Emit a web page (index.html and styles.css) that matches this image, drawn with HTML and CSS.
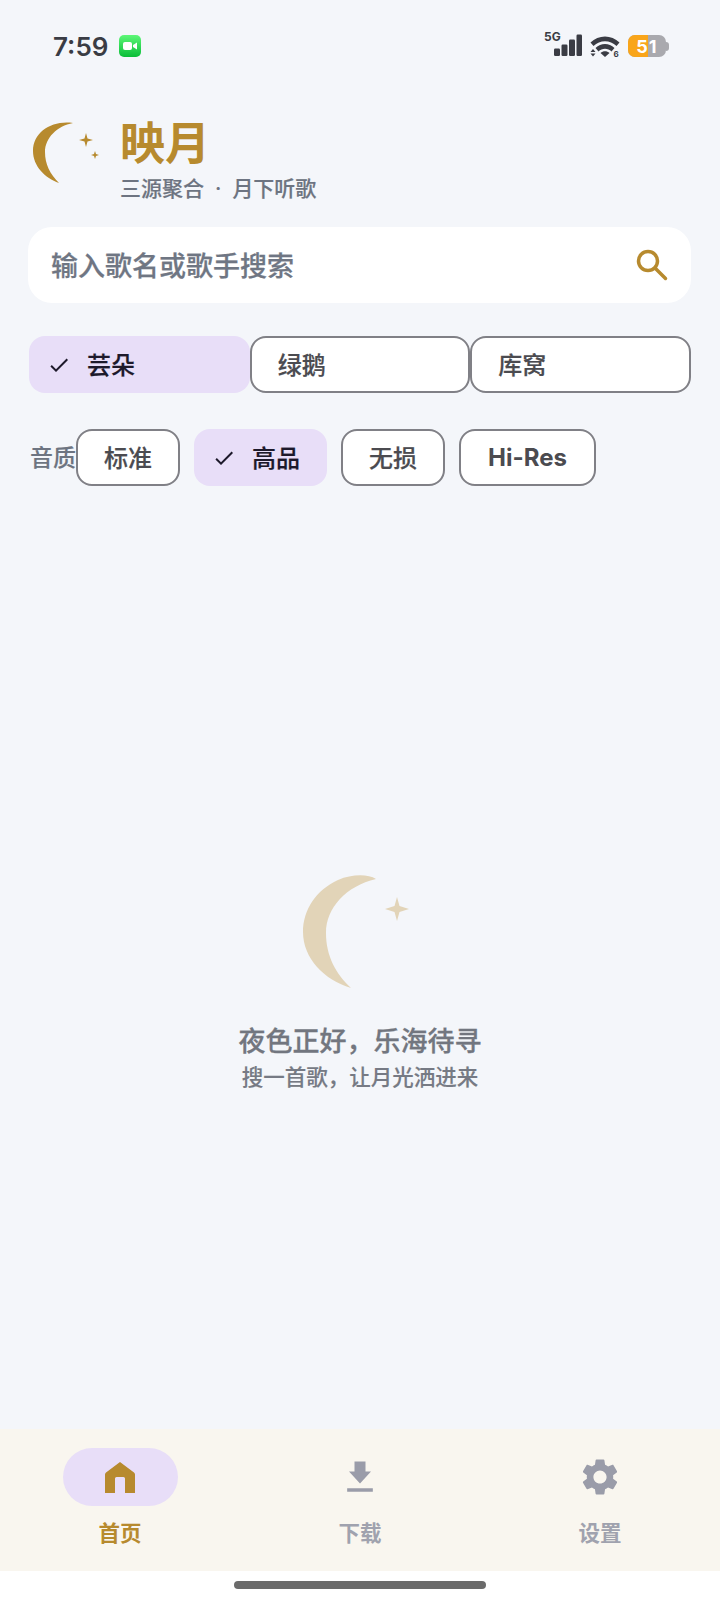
FILE: index.html
```html
<!DOCTYPE html>
<html lang="zh-CN">
<head>
  <meta charset="UTF-8">
  <meta name="viewport" content="width=device-width, initial-scale=1.0">
  <title>映月</title>
  <link rel="stylesheet" href="styles.css">
</head>
<body>

<div class="page">
  <div class="status-bar">
    <div class="status-left">
      <span class="time">7:59</span>
      <svg class="facetime" viewBox="0 0 22 22" width="22" height="22">
        <defs>
          <linearGradient id="ftGreen" x1="0" y1="0" x2="0" y2="1">
            <stop offset="0" stop-color="#5df777"></stop>
            <stop offset="1" stop-color="#0abd38"></stop>
          </linearGradient>
        </defs>
        <rect width="22" height="22" rx="5" fill="url(#ftGreen)"></rect>
        <rect x="4" y="7" width="9" height="8" rx="2" fill="#fff"></rect>
        <path d="M14 10l4-2.6v7.2L14 12z" fill="#fff"></path>
      </svg>
    </div>
    <div class="status-right">
      <svg class="signal" viewBox="0 0 38 28" width="38" height="28">
        <text x="0" y="11" class="signal-text">5G</text>
        <rect x="10" y="18.500" width="6" height="7.500" rx="1.200"></rect>
        <rect x="17.500" y="14.500" width="6" height="11.500" rx="1.200"></rect>
        <rect x="25" y="9.500" width="6" height="16.500" rx="1.200"></rect>
        <rect x="32.500" y="4.500" width="5.500" height="21.500" rx="1.200"></rect>
      </svg>
      <svg class="wifi" viewBox="0 0 30 22" width="30" height="22">
        <path d="M0.500 7.500C8.500 -0.500 21.500 -0.500 29.500 7.500l-3 3.500C20 4.500 10 4.500 3.500 11z"></path>
        <path d="M5.500 13C11 7.800 19 7.800 24.500 13l-3 3.400C18 13 12 13 8.500 16.400z"></path>
        <path d="M10.500 18c2.500-2.200 6.500-2.200 9 0l-4.500 4z"></path>
        <path d="M0.500 17l2.500-3 2.500 3zM0.500 18.500l2.500 3 2.500-3z"></path>
        <text x="23.500" y="21.500" class="wifi-text">6</text>
      </svg>
      <div class="battery">
        <div class="battery-body">
          <div class="battery-fill"></div>
          <span class="battery-num">51</span>
        </div>
        <div class="battery-tip"></div>
      </div>
    </div>
  </div>

  <div class="brand">
    <svg class="brand-moon" viewBox="0 0 76 66" width="76" height="66">
      <path d="M43 3C22 0 3 12 3 31C3 46 15 58 29 63C20 54 15 44 15 32C15 18 27 6 43 3Z"></path>
      <path d="M56 13l1.500 5.500L63 20l-5.500 1.500L56 27l-1.500-5.500L49 20l5.500-1.500z"></path>
      <path d="M65 31l1 3 3 1-3 1-1 3-1-3-3-1 3-1z"></path>
    </svg>
    <div class="brand-text">
      <div class="brand-title">映月</div>
      <div class="brand-sub">三源聚合<span class="brand-dot">·</span>月下听歌</div>
    </div>
  </div>

  <div class="search">
    <span class="search-hint">输入歌名或歌手搜索</span>
    <svg class="search-icon" viewBox="0 0 36 36" width="36" height="36">
      <circle cx="14" cy="14" r="9.500"></circle>
      <path d="M21 21L31.500 31.500"></path>
    </svg>
  </div>

  <div class="source-row">
    <div class="chip chip-on">
      <svg class="check" viewBox="0 0 24 24" width="24" height="24"><path d="M9 16.170L4.830 12l-1.420 1.410L9 19 21 7l-1.410-1.410z"></path></svg>
      <span>芸朵</span>
    </div>
    <div class="chip">绿鹅</div>
    <div class="chip">库窝</div>
  </div>

  <div class="quality-row">
    <span class="quality-label">音质</span>
    <div class="chip">标准</div>
    <div class="chip chip-on">
      <svg class="check" viewBox="0 0 24 24" width="24" height="24"><path d="M9 16.170L4.830 12l-1.420 1.410L9 19 21 7l-1.410-1.410z"></path></svg>
      <span>高品</span>
    </div>
    <div class="chip">无损</div>
    <div class="chip chip-latin">Hi-Res</div>
  </div>

  <div class="empty">
    <svg class="empty-moon" viewBox="0 0 115 125" width="115" height="125">
      <path d="M76 9C68 4 52 4 38 10C16 20 3 40 3 62C3 88 24 110 51 118C36 104 26 86 26 63C26 38 46 16 76 9Z"></path>
      <path d="M97 27l2.500 9 9.500 3-9.500 3-2.500 9-2.500-9-9.500-3 9.500-3z"></path>
    </svg>
    <div class="empty-title">夜色正好，乐海待寻</div>
    <div class="empty-sub">搜一首歌，让月光洒进来</div>
  </div>

  <div class="nav">
    <div class="nav-item nav-on">
      <div class="nav-icon">
        <svg viewBox="0 0 30 31" width="30" height="31">
          <path d="M15 0L29 10.500Q30 11.300 30 12.500V31H20V16.500Q20 15 18.500 15H11.500Q10 15 10 16.500V31H0V12.500Q0 11.300 1 10.500Z"></path>
        </svg>
      </div>
      <span>首页</span>
    </div>
    <div class="nav-item">
      <div class="nav-icon">
        <svg viewBox="0 0 24 24" width="44" height="44">
          <path d="M15 9V3.500H9V9H6l6 6.500L18 9zM5 18.200v1.800h14v-1.800z"></path>
        </svg>
      </div>
      <span>下载</span>
    </div>
    <div class="nav-item">
      <div class="nav-icon">
        <svg viewBox="0 0 24 24" width="44" height="44">
          <path d="M19.140 12.940c.04-.3.06-.61.06-.94 0-.32-.02-.64-.07-.94l2.030-1.580c.18-.14.23-.41.12-.61l-1.920-3.320c-.12-.22-.37-.29-.59-.22l-2.390.96c-.5-.38-1.030-.7-1.620-.94l-.36-2.540c-.04-.24-.24-.41-.48-.41h-3.840c-.24 0-.43.17-.47.41l-.36 2.540c-.59.24-1.130.57-1.620.94l-2.390-.96c-.22-.08-.47 0-.59.22L2.740 8.870c-.12.21-.08.47.12.61l2.030 1.580c-.05.3-.09.63-.09.94s.02.64.07.94l-2.030 1.580c-.18.14-.23.41-.12.61l1.920 3.320c.12.22.37.29.59.22l2.390-.96c.5.38 1.030.7 1.620.94l.36 2.540c.05.24.24.41.48.41h3.840c.24 0 .44-.17.47-.41l.36-2.540c.59-.24 1.130-.56 1.620-.94l2.390.96c.22.08.47 0 .59-.22l1.920-3.320c.12-.22.07-.47-.12-.61l-2.010-1.580zM12 15.600c-1.980 0-3.600-1.620-3.600-3.600s1.620-3.600 3.600-3.600 3.600 1.620 3.600 3.600-1.620 3.600-3.600 3.600z"></path>
        </svg>
      </div>
      <span>设置</span>
    </div>
  </div>

  <div class="home-area">
    <div class="home-bar"></div>
  </div>
</div>

</body>
</html>
```

FILE: styles.css
```css
* {
  box-sizing: border-box;
}
body {
  margin: 0;
  background: #f4f6fa;
  font-family: Inter, "Noto Sans CJK SC", sans-serif;
  color: #49454f;
}
.page {
  width: 720px;
  height: 1600px;
  display: flex;
  flex-direction: column;
}

/* status bar */
.status-bar {
  height: 92px;
  padding: 30px 51px 0 53px;
  display: flex;
  justify-content: space-between;
  align-items: flex-start;
}
.status-left {
  display: flex;
  align-items: center;
  gap: 11px;
  height: 32px;
}
.time {
  font-size: 26px;
  font-weight: 600;
  color: #3a3c44;
}
.status-right {
  display: flex;
  gap: 8px;
  height: 32px;
  align-items: flex-start;
}
.signal {
  fill: #3a3c44;
}
.signal-text {
  font-size: 12px;
  font-weight: 700;
}
.wifi {
  fill: #3a3c44;
  margin-top: 5px;
}
.wifi-text {
  font-size: 8px;
  font-weight: 700;
}
.battery {
  display: flex;
  align-items: center;
  margin-top: 5px;
}
.battery-body {
  width: 38px;
  height: 22px;
  border-radius: 7px;
  background: #a9a9ae;
  position: relative;
  overflow: hidden;
  display: flex;
  align-items: center;
  justify-content: center;
}
.battery-tip {
  width: 3px;
  height: 9px;
  border-radius: 0 3px 3px 0;
  background: #a9a9ae;
}
.battery-fill {
  position: absolute;
  left: 0;
  top: 0;
  bottom: 0;
  width: 20px;
  background: #f9a51a;
}
.battery-num {
  position: relative;
  color: #fff;
  font-size: 18px;
  font-weight: 700;
  letter-spacing: 1px;
}

/* brand */
.brand {
  display: flex;
  padding-left: 30px;
  height: 135px;
  gap: 14px;
  padding-top: 28px;
}
.brand-moon {
  fill: #b78a2e;
  flex-shrink: 0;
}
.brand-text {
  margin-top: -4px;
}
.brand-title {
  font-family: "Liberation Serif", "Noto Sans CJK SC", serif;
  font-size: 45px;
  font-weight: 700;
  line-height: 58px;
  color: #b78a2e;
}
.brand-sub {
  font-size: 21px;
  line-height: 30px;
  color: #6d7481;
  font-weight: 500;
  -webkit-text-stroke: 0.15px #6d7481;
}
.brand-dot {
  margin: 0 11px;
}

/* search */
.search {
  margin: 0 29px 0 28px;
  height: 76px;
  background: #fff;
  border-radius: 24px;
  padding: 0 21px 2px 23px;
  display: flex;
  align-items: center;
  justify-content: space-between;
}
.search-hint {
  font-size: 27px;
  font-weight: 500;
  color: #6f7683;
  -webkit-text-stroke: 0.25px #6f7683;
}
.search-icon {
  fill: none;
  stroke: #b78a2e;
  stroke-width: 3.500;
  stroke-linecap: round;
  margin-top: 2px;
}

/* chips */
.source-row {
  display: grid;
  grid-template-columns: repeat(3, 1fr);
  margin: 33px 29px 0;
}
.quality-row {
  display: flex;
  align-items: center;
  gap: 14px;
  margin: 36px 0 0 30px;
}
.quality-label {
  font-size: 23px;
  font-weight: 500;
  color: #6d7481;
  width: 46px;
  margin-right: -14px;
  margin-top: -3px;
  white-space: nowrap;
  -webkit-text-stroke: 0.15px #6d7481;
}
.chip {
  height: 57px;
  padding: 0 26px 3px;
  border: 2px solid #808086;
  border-radius: 16px;
  background: #fff;
  font-size: 24px;
  font-weight: 500;
  display: flex;
  align-items: center;
  color: #4b4b50;
  -webkit-text-stroke: 0.2px #4b4b50;
}
.chip-latin {
  font-weight: 700;
  -webkit-text-stroke: 0;
  padding: 0 27px 1px;
}
.chip-on {
  background: #e8def8;
  border: none;
  padding: 0 27px 3px 18px;
  gap: 16px;
  color: #1d192b;
  -webkit-text-stroke: 0.2px #1d192b;
}
.check {
  fill: #1d192b;
  flex-shrink: 0;
  margin-top: 3px;
  stroke: none;
}

/* empty state */
.empty {
  flex: 1;
  display: flex;
  flex-direction: column;
  align-items: center;
  padding-top: 384px;
}
.empty-moon {
  fill: #e2d4b8;
  margin-left: -5px;
}
.empty-title {
  font-size: 27px;
  font-weight: 500;
  line-height: 40px;
  margin-top: 27px;
  color: #72767f;
  -webkit-text-stroke: 0.3px #72767f;
}
.empty-sub {
  font-size: 21.500px;
  font-weight: 500;
  line-height: 32px;
  margin-top: -1px;
  color: #767a84;
  -webkit-text-stroke: 0.15px #767a84;
}

/* bottom nav */
.nav {
  height: 142px;
  background: #f9f6ef;
  display: flex;
  padding-top: 19px;
}
.nav-item {
  flex: 1;
  display: flex;
  flex-direction: column;
  align-items: center;
  font-size: 21.500px;
  font-weight: 600;
  color: #a0a2ae;
  fill: #9a9ca9;
}
.nav-icon {
  width: 115px;
  height: 58px;
  border-radius: 29px;
  display: flex;
  align-items: center;
  justify-content: center;
  margin-bottom: 10px;
}
.nav-on {
  color: #b78a2e;
  fill: #b78a2e;
  font-weight: 700;
}
.nav-on .nav-icon {
  background: #e8def8;
}

.home-area {
  height: 29px;
  background: #fff;
  padding-top: 10px;
}
.home-bar {
  width: 252px;
  height: 8px;
  margin: 0 auto;
  border-radius: 4px;
  background: #6b6b6b;
}
```
